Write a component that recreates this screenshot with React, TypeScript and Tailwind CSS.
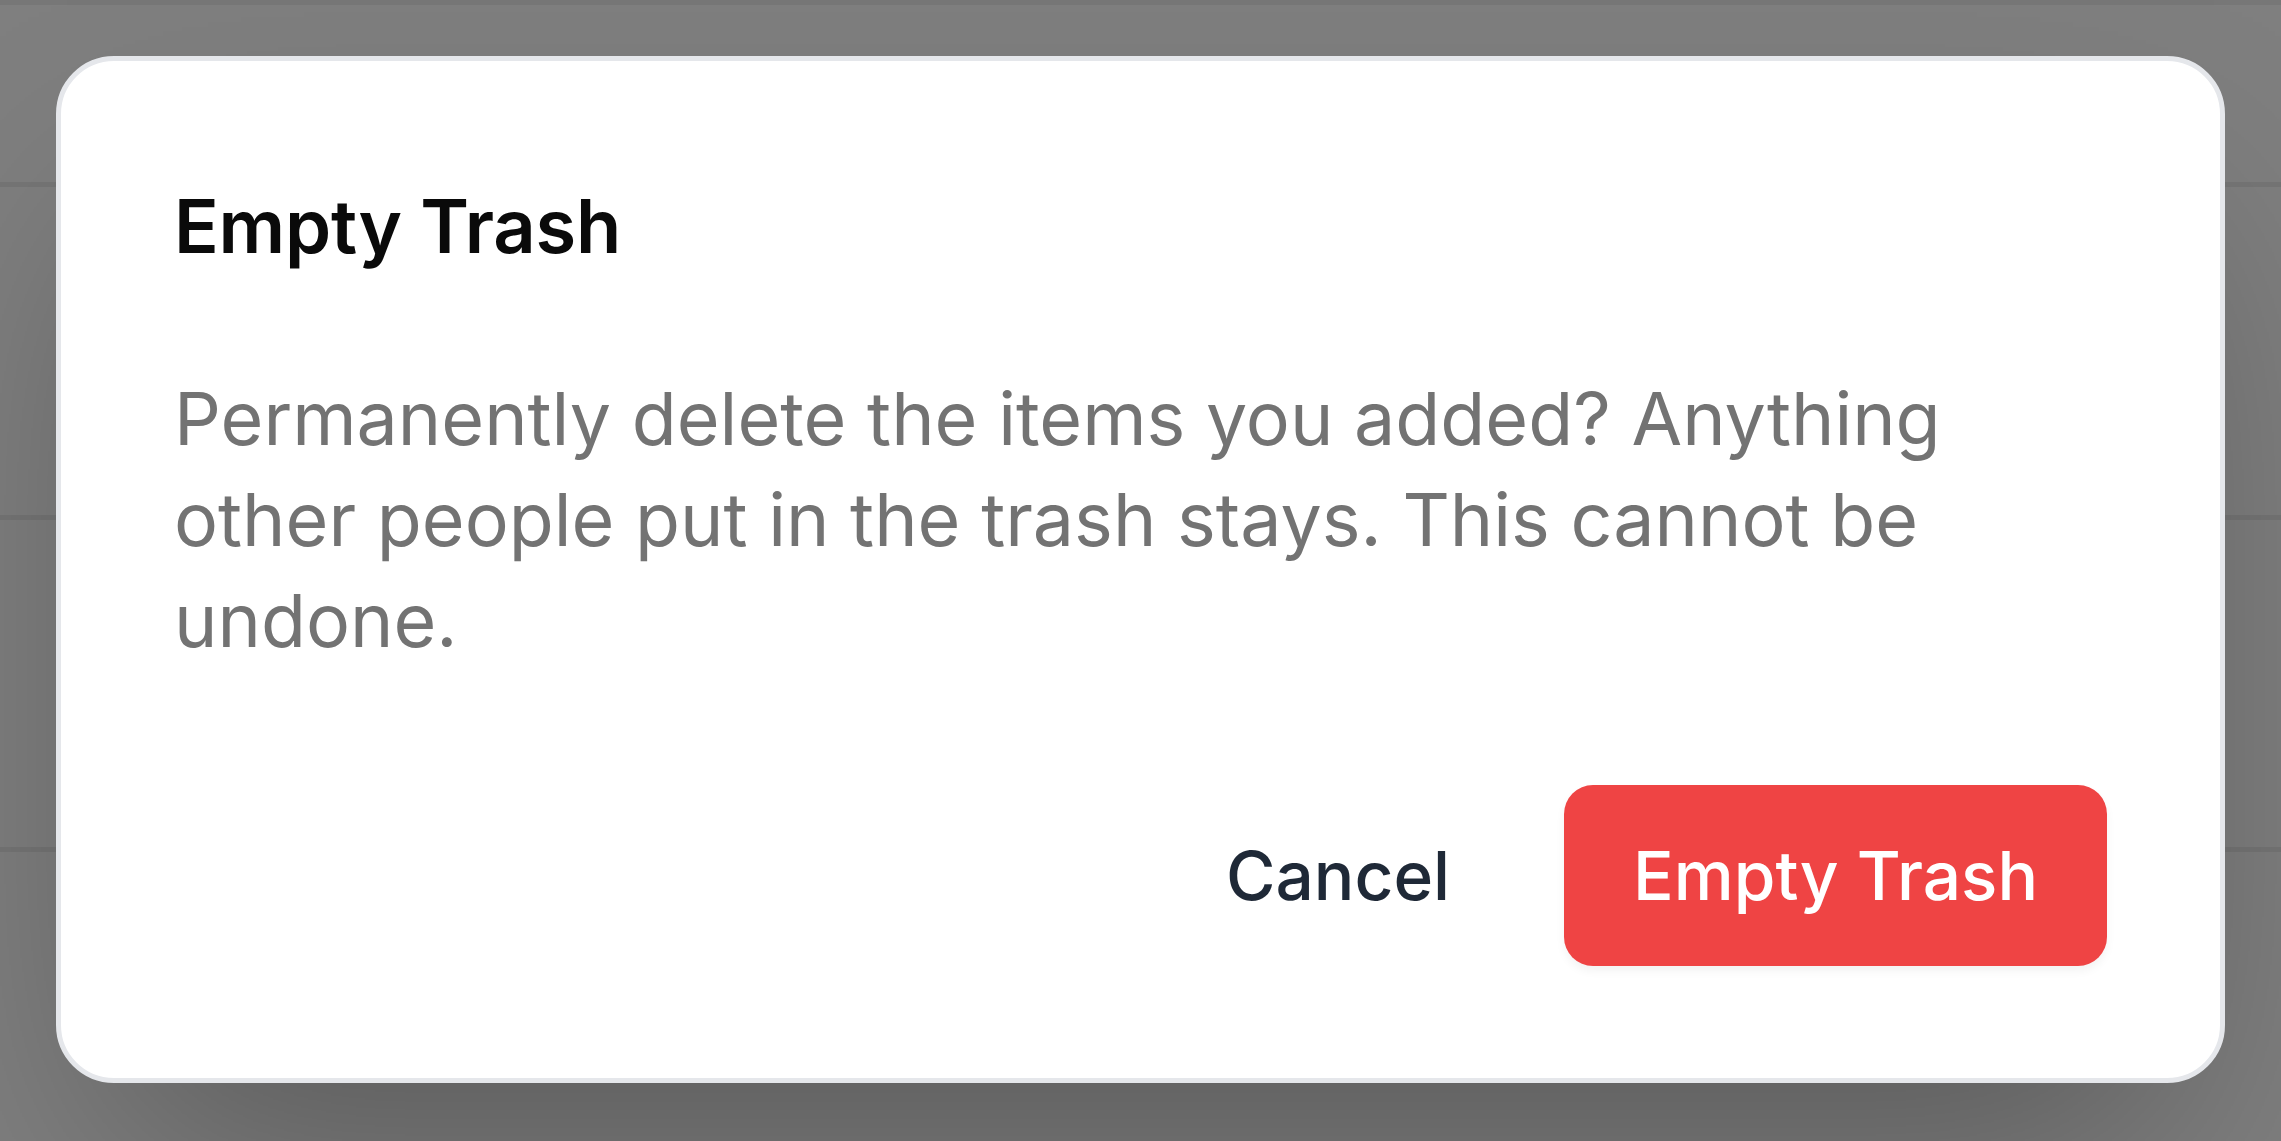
import React from "react";

// Background page rows (seen through the overlay)
const rows = [182, 333, 332];

const App = () => {
  return (
    <div className="relative w-[2281px] h-[1141px] overflow-hidden bg-white font-[Inter,sans-serif]">
      {/* page behind the dialog */}
      <div className="flex flex-col border-t-[5px] border-[#eeeeee]">
        {rows.map((h, i) => (
          <div
            key={i}
            className="border-b-[5px] border-[#ececec]"
            style={{ height: h }}
          />
        ))}
      </div>

      {/* overlay */}
      <div className="absolute inset-0 bg-black/50 flex items-center justify-center">
        <div className="w-[2169px] h-[1027px] bg-white border-[5px] border-[#e5e7eb] rounded-[58px] p-[113px] shadow-[0_120px_240px_-58px_rgba(0,0,0,0.3)] flex flex-col -translate-y-px">
          <h2 className="text-[74px] leading-[105px] font-semibold text-[#0a0a0a] tracking-[-0.2px]">
            Empty Trash
          </h2>
          <p className="mt-[89px] text-[73.5px] leading-[101px] text-[#737373]">
            Permanently delete the items you added? Anything other people put in
            the trash stays. This cannot be undone.
          </p>
          <div className="mt-[114px] flex items-center justify-end gap-[43px]">
            <button className="h-[181px] px-[71px] text-[67.5px] font-medium text-[#1f2937]">
              Cancel
            </button>
            <button className="h-[181px] px-[69px] rounded-[29px] bg-[#ef4444] text-[67.5px] font-medium text-white shadow-[0_5px_10px_rgba(0,0,0,0.05)]">
              Empty Trash
            </button>
          </div>
        </div>
      </div>
    </div>
  );
};

export default App;
